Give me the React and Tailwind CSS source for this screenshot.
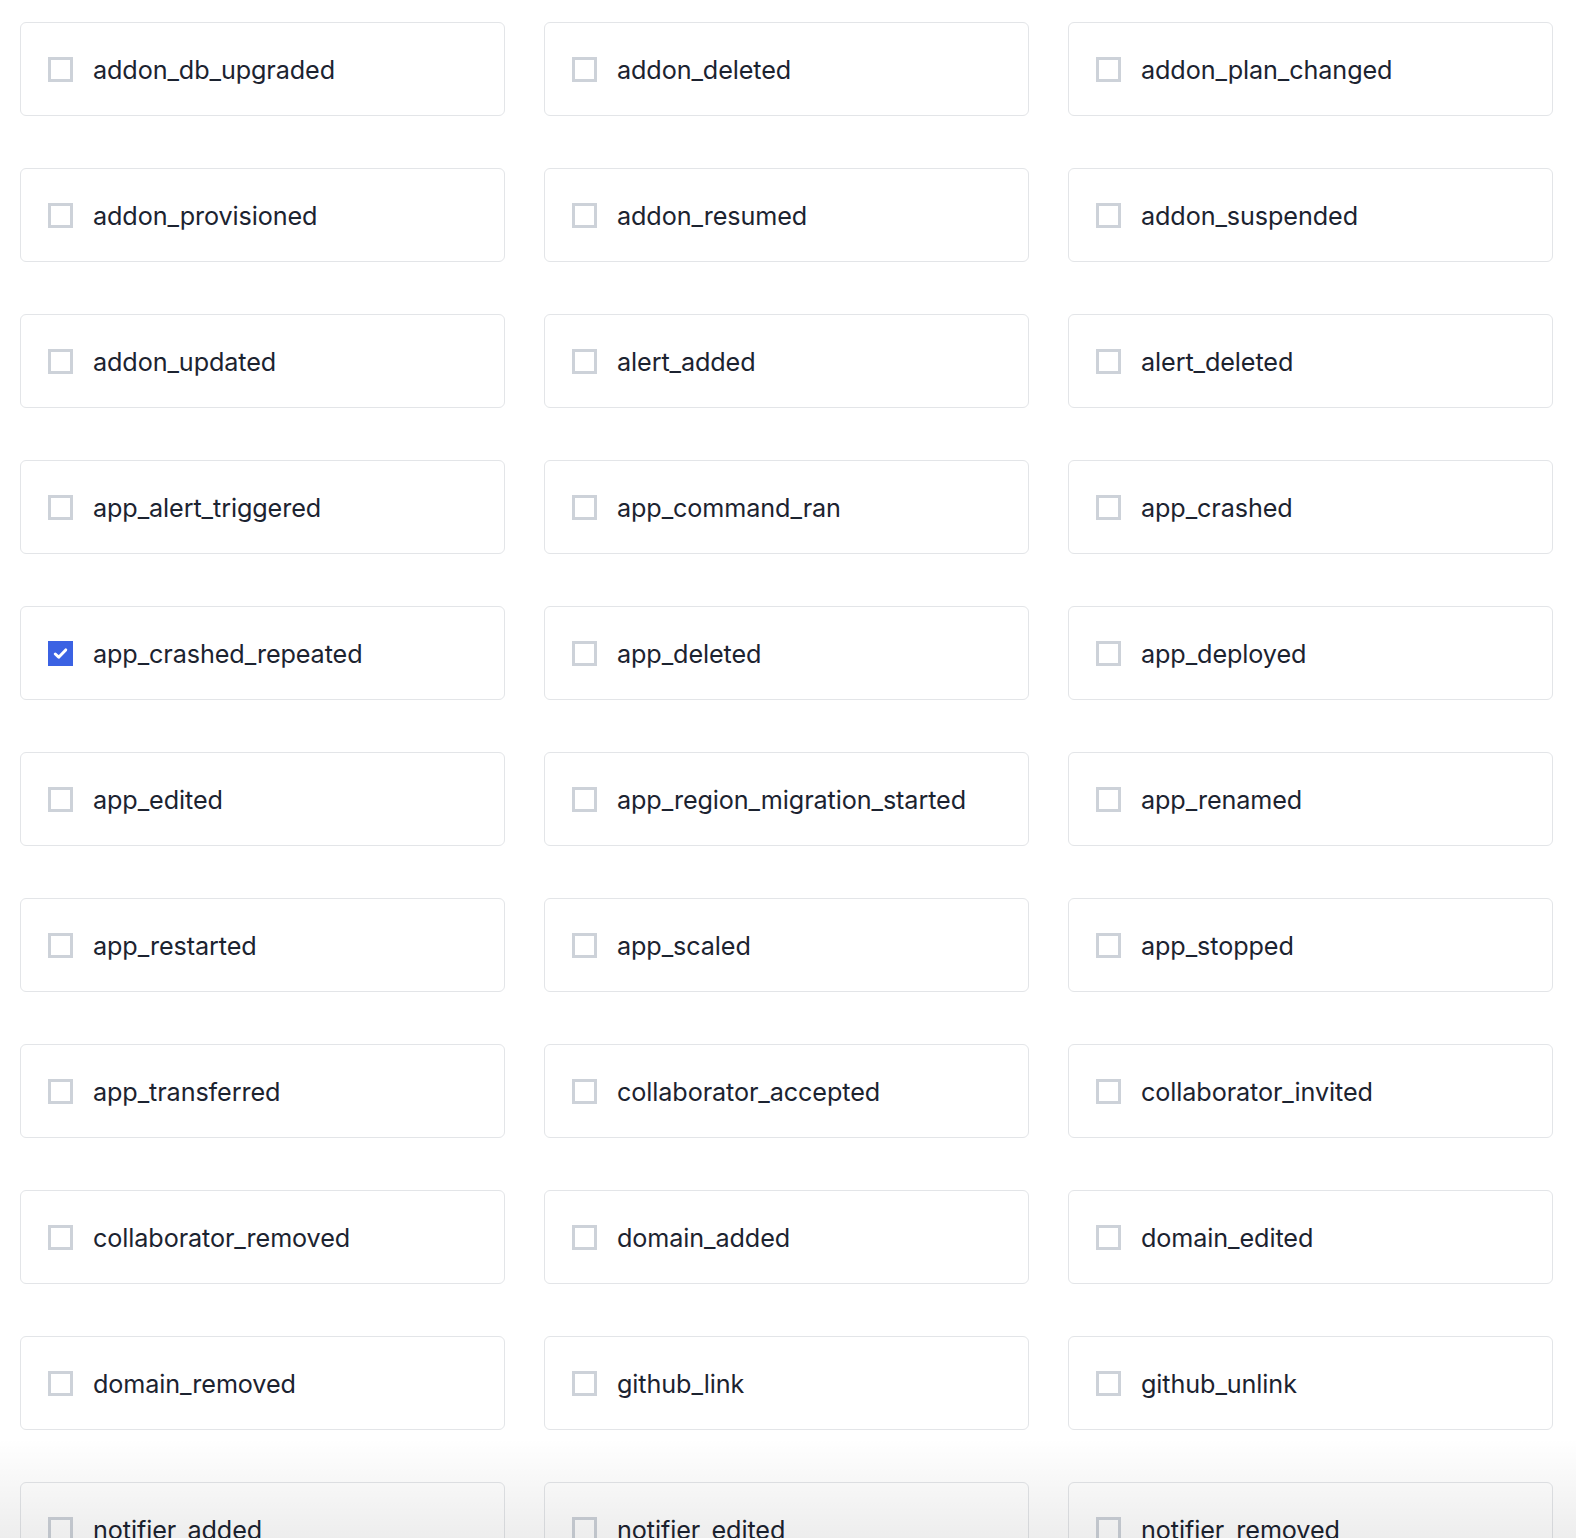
import { useState } from "react"

const EVENTS = [
  "addon_db_upgraded", "addon_deleted", "addon_plan_changed",
  "addon_provisioned", "addon_resumed", "addon_suspended",
  "addon_updated", "alert_added", "alert_deleted",
  "app_alert_triggered", "app_command_ran", "app_crashed",
  "app_crashed_repeated", "app_deleted", "app_deployed",
  "app_edited", "app_region_migration_started", "app_renamed",
  "app_restarted", "app_scaled", "app_stopped",
  "app_transferred", "collaborator_accepted", "collaborator_invited",
  "collaborator_removed", "domain_added", "domain_edited",
  "domain_removed", "github_link", "github_unlink",
  "notifier_added", "notifier_edited", "notifier_removed"
]

export default function App() {
  const [selected, setSelected] = useState({ app_crashed_repeated: true })

  function toggle(key) {
    setSelected(prev => ({ ...prev, [key]: !prev[key] }))
  }

  return (
    <div className="relative h-[1538px] overflow-hidden bg-white font-['Inter','Liberation_Sans',sans-serif]">
      <div className="grid grid-cols-3 gap-x-[39px] gap-y-[52px] pl-5 pr-[23px] pt-[22px]">
        {EVENTS.map(name => (
          <EventTile
            key={name}
            label={name}
            checked={!!selected[name]}
            onChange={() => toggle(name)}
          />
        ))}
      </div>

      {/* grey fade over the bottom of the list */}
      <div className="pointer-events-none absolute inset-x-0 bottom-0 h-[100px] bg-linear-to-b from-black/0 to-black/[0.07]" />
    </div>
  )
}

function EventTile({ label, checked, onChange }) {
  return (
    <label className="flex h-[94px] cursor-pointer select-none items-center gap-5 rounded-md border border-[#e3e5e8] bg-white pl-[27px] pr-4">
      <input type="checkbox" className="sr-only" checked={checked} onChange={onChange} />
      <span
        className={`flex h-[25px] w-[25px] shrink-0 items-center justify-center ${
          checked ? "bg-[#3b62e3]" : "border-[3px] border-[#cdd2d9] bg-white"
        }`}
      >
        {checked && (
          <svg viewBox="0 0 16 16" className="h-[19px] w-[19px]" fill="none">
            <path d="M3.6 8.4l2.9 2.7L12.4 5" stroke="white" strokeWidth="2.5" strokeLinecap="round" strokeLinejoin="round" />
          </svg>
        )}
      </span>
      <span className="mt-[3px] text-[25.2px] leading-none tracking-[-0.1px] text-[#1c2330]">{label}</span>
    </label>
  )
}
